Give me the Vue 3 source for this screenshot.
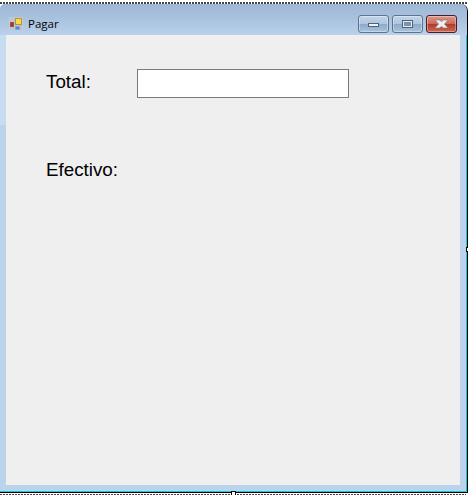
<script setup>
const labels = [
  { text: 'Total:', hasInput: true },
  { text: 'Efectivo:', hasInput: false }
]
</script>

<template>
  <div class="screen">
    <div class="dots"></div>
    <div class="window">
      <div class="titlebar">
        <svg class="app-icon" width="14" height="14" viewBox="0 0 14 14">
          <rect x="0.500" y="0.500" width="13" height="13" fill="#bcc6d2" stroke="#c4ccd6" />
          <rect x="1.500" y="5.500" width="3" height="4" fill="#d0201c" stroke="#8e5a50" />
          <rect x="6.500" y="1.500" width="6" height="6" fill="#fbd84a" stroke="#b8922e" />
          <rect x="6.500" y="9.500" width="4" height="3" fill="#4f86e4" stroke="#86a8dc" />
        </svg>
        <span class="title">Pagar</span>
        <div class="controls">
          <button class="ctl">
            <span class="min-glyph"></span>
          </button>
          <button class="ctl">
            <span class="max-glyph"></span>
          </button>
          <button class="ctl close">
            <svg width="15" height="10" viewBox="0 0 15 10">
              <path d="M1 1h4.500l2 1.500 2-1.500h4.500l-3.500 4 3.500 4h-4.500l-2-1.500-2 1.500h-4.500l3.500-4z" fill="#eceef0" stroke="#8a7270" stroke-width="0.6" />
            </svg>
          </button>
        </div>
      </div>
      <div class="client">
        <div v-for="item in labels" :key="item.text" class="row">
          <span class="label">{{ item.text }}</span>
          <div v-if="item.hasInput" class="field"></div>
        </div>
      </div>
    </div>
    <div class="dots low"></div>
    <div class="grip grip-right"></div>
    <div class="grip grip-bottom"></div>
  </div>
</template>

<style scoped>
.screen {
  width: 468px;
  height: 495px;
  background: #fff;
  overflow: hidden;
  position: relative;
}
.dots {
  height: 2px;
  margin-top: 2px;
  background: repeating-linear-gradient(90deg, #444 0 2px, #fff 2px 3px);
}
.dots.low {
  height: 1px;
  margin-top: 1px;
  width: 466px;
}
.window {
  width: 467px;
  height: 488px;
  border-right: 1px solid #000;
  border-bottom: 1px solid #000;
  border-top-left-radius: 5px;
  border-top-right-radius: 7px;
  background: linear-gradient(#c8dcf1, #c8dcf1) no-repeat 0 31px / 6px 90px, #bcd3ec;
  box-shadow: inset -1px -1px 0 #19c8dc;
  display: flex;
  flex-direction: column;
}
.titlebar {
  height: 31px;
  flex: none;
  box-sizing: border-box;
  display: flex;
  align-items: center;
  padding: 8px 10px 0 9px;
  border-top-left-radius: 5px;
  border-top-right-radius: 7px;
  background: linear-gradient(180deg, #9db8d6 0%, #a8c1dd 45%, #bad1ea 100%);
}
.app-icon {
  flex: none;
}
.title {
  margin-left: 5px;
  font: 11.500px "Open Sans", "Noto Sans", sans-serif;
  color: #000;
}
.controls {
  margin-left: auto;
  display: flex;
  gap: 3px;
}
.ctl {
  width: 31px;
  height: 18px;
  padding: 0;
  border: 1px solid #5f7390;
  border-radius: 3px;
  background: linear-gradient(180deg, #c2d5e9 0%, #afc6df 48%, #8cabc9 52%, #a9c3de 100%);
  box-shadow: inset 0 0 0 1px rgba(255, 255, 255, 0.35);
  display: flex;
  align-items: center;
  justify-content: center;
}
.ctl.close {
  border-color: #4a1c2c;
  background: linear-gradient(180deg, #dc9a8c 0%, #c86a58 48%, #b23a26 52%, #cc6a54 100%);
}
.min-glyph {
  width: 11px;
  height: 4px;
  margin-top: 3px;
  border: 1px solid #4e6280;
  box-sizing: border-box;
  background: #eef1f5;
}
.max-glyph {
  width: 11px;
  height: 8px;
  box-sizing: border-box;
  border: 2px solid #e4ebf3;
  outline: 1px solid #4e6280;
  outline-offset: -1px;
  background: #7d93ad;
}
.client {
  flex: none;
  width: 454px;
  height: 450px;
  margin-left: 6px;
  background: #efefef;
  padding: 34px 0 0 40px;
  box-sizing: border-box;
  display: flex;
  flex-direction: column;
  gap: 58px;
}
.row {
  display: flex;
  align-items: flex-start;
  height: 30px;
}
.label {
  width: 91px;
  font: 18.800px/26px "Liberation Sans", Arial, sans-serif;
  color: #000;
}
.field {
  width: 212px;
  height: 29px;
  box-sizing: border-box;
  background: #fff;
  border: 1px solid #7a7a7a;
}
.grip {
  position: absolute;
  background: #fff;
  box-sizing: border-box;
  border: 1px solid #000;
}
.grip-right {
  left: 466px;
  top: 247px;
  width: 4px;
  height: 5px;
}
.grip-bottom {
  left: 231px;
  top: 491px;
  width: 5px;
  height: 6px;
}
</style>

<style>
html, body {
  margin: 0;
  background: #fff;
}
</style>
